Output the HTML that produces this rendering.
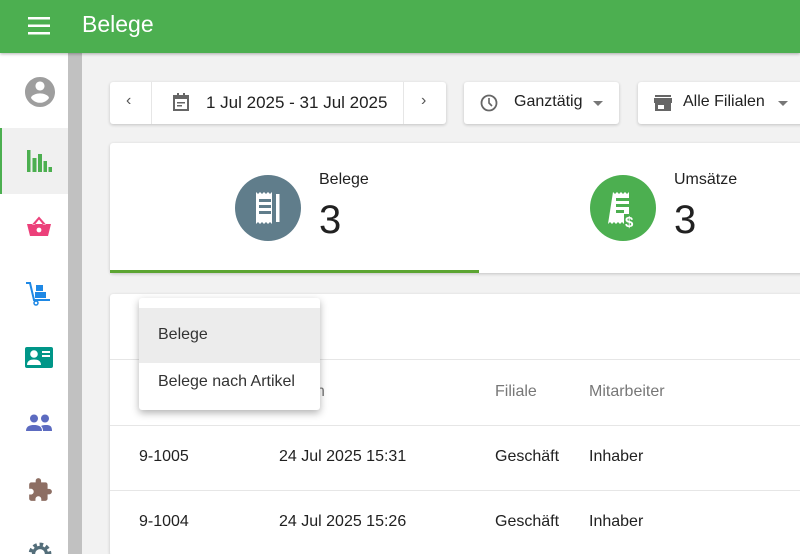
<!DOCTYPE html>
<html style="overflow:hidden"><head><style>
*{box-sizing:border-box;margin:0;padding:0}
html,body{width:800px;height:554px;overflow:hidden}
body{background:#f2f2f2;font-family:"Liberation Sans",sans-serif;position:relative;color:#212121}
.hdr{position:absolute;left:0;top:0;width:800px;height:53px;background:#4caf50;box-shadow:0 1px 3px rgba(0,0,0,.3);z-index:2}
.hdr .t{position:absolute;left:82px;top:11px;color:#fff;font-size:23px}
.side{position:absolute;left:0;top:53px;width:68px;height:501px;background:#fff;overflow:hidden}
.scr{position:absolute;left:68px;top:53px;width:14px;height:501px;background:#c1c1c1}
.ic{position:absolute}
.card{position:absolute;background:#fff;border-radius:3px;box-shadow:0 1px 3px rgba(0,0,0,.2)}
.tx{position:absolute;font-size:16px;white-space:nowrap}
.line{position:absolute;left:110px;width:690px;height:1px;background:#e6e6e6}
</style></head><body>
<div class="hdr">
<svg style="position:absolute;left:28px;top:17px" width="22" height="18"><rect y="0" width="22" height="2.5" fill="#fff"/><rect y="7.5" width="22" height="2.5" fill="#fff"/><rect y="15" width="22" height="2.5" fill="#fff"/></svg>
<div class="t">Belege</div></div>
<div class="side">
<svg class="ic" style="top:21px;left:22px" width="36" height="36" viewBox="0 0 24 24"><path fill="#9e9e9e" d="M12 2C6.5 2 2 6.5 2 12s4.5 10 10 10 10-4.5 10-10S17.5 2 12 2zm0 3c1.7 0 3 1.3 3 3s-1.3 3-3 3-3-1.3-3-3 1.3-3 3-3zm0 14.2c-2.5 0-4.7-1.3-6-3.2 0-2 4-3.1 6-3.1s6 1.1 6 3.1c-1.3 1.9-3.5 3.2-6 3.2z"/></svg>
<div style="position:absolute;left:0;top:75px;width:68px;height:66px;background:#f0f0f0;border-left:2px solid #4caf50"></div>
<svg class="ic" style="top:97px;left:27px" width="25" height="22"><path fill="#4caf50" d="M0 0h3.5v22H0zM5.5 22V8h4v14zM11 22V4h4v18zM16.5 22V11h3.5v11zM21.5 22v-5h3.5v5z"/></svg>
<svg class="ic" style="top:162px;left:26px" width="26" height="24" viewBox="0 0 26 24"><path fill="#ec407a" d="M13 1.5l-7 8h3l4-5 4 5h3zM1 9h24l-3 12H4z"/><circle cx="13" cy="15" r="2.4" fill="#fff"/></svg>
<svg class="ic" style="top:227px;left:25px" width="28" height="28" viewBox="0 0 28 28"><path fill="none" stroke="#1e88e5" stroke-width="2" d="M1 3h4l4 17h16"/><rect x="11" y="5" width="7" height="6" fill="#1e88e5"/><rect x="10" y="12" width="11" height="6" fill="#1e88e5"/><circle cx="11" cy="23" r="2" fill="none" stroke="#1e88e5" stroke-width="1.5"/></svg>
<svg class="ic" style="top:294px;left:25px" width="28" height="22"><rect width="28" height="21" rx="2" fill="#009688"/><circle cx="9" cy="7" r="3.8" fill="#fff"/><path fill="#fff" d="M2 18c0-4 3-5.5 7-5.5s7 1.5 7 5.5z"/><rect x="17" y="4" width="8" height="2" fill="#fff"/><rect x="17" y="8" width="8" height="2" fill="#fff"/></svg>
<svg class="ic" style="top:361px;left:26px" width="28" height="18"><circle cx="8" cy="4.5" r="4" fill="#5c6bc0"/><circle cx="19" cy="4.5" r="4" fill="#5c6bc0"/><path fill="#5c6bc0" d="M0 17c0-5 4-6 8-6s8 1 8 6zM17 17c0-3-1-4-2-5 2-1 4-1 5-1 4 0 6 1 6 6z"/></svg>
<svg class="ic" style="top:424px;left:27px" width="26" height="26" viewBox="0 0 24 24"><path fill="#8d6e63" d="M20.5 11H19V7c0-1.1-.9-2-2-2h-4V3.5a2.5 2.5 0 0 0-5 0V5H4c-1.1 0-2 .9-2 2v3.8h1.5c1.5 0 2.7 1.2 2.7 2.7S5 16.2 3.5 16.2H2V20c0 1.1.9 2 2 2h3.8v-1.5c0-1.5 1.2-2.7 2.7-2.7s2.7 1.2 2.7 2.7V22H17c1.1 0 2-.9 2-2v-4h1.5a2.5 2.5 0 0 0 0-5z"/></svg>
<svg class="ic" style="top:488px;left:27px" width="26" height="26" viewBox="0 0 24 24"><circle cx="12" cy="12" r="8" fill="none" stroke="#546e7a" stroke-width="5" stroke-dasharray="3 2.3"/><circle cx="12" cy="12" r="6" fill="none" stroke="#546e7a" stroke-width="3"/></svg>
</div>
<div class="scr"></div>

<div class="card" style="left:110px;top:82px;width:336px;height:42px">
<div style="position:absolute;left:41px;top:0;width:1px;height:42px;background:#e6e6e6"></div>
<div style="position:absolute;left:293px;top:0;width:1px;height:42px;background:#e6e6e6"></div>
<div class="tx" style="left:16px;top:10px;color:#555">‹</div>
<svg style="position:absolute;left:63px;top:11px" width="16" height="18"><rect x="1" y="3" width="14" height="14" fill="none" stroke="#666" stroke-width="2"/><rect x="1" y="3" width="14" height="3" fill="#666"/><rect x="4" y="0" width="2" height="4" fill="#666"/><rect x="10" y="0" width="2" height="4" fill="#666"/><rect x="4" y="9" width="8" height="1.5" fill="#666"/><rect x="4" y="12" width="5" height="1.5" fill="#666"/></svg>
<div class="tx" style="left:96px;top:11px;font-size:17px">1 Jul 2025 - 31 Jul 2025</div>
<div class="tx" style="left:311px;top:10px;color:#555">›</div>
</div>
<div class="card" style="left:464px;top:82px;width:155px;height:42px">
<svg style="position:absolute;left:16px;top:12px" width="18" height="18"><circle cx="9" cy="9" r="7.5" fill="none" stroke="#666" stroke-width="1.8"/><path d="M9 4v5l3 3" fill="none" stroke="#666" stroke-width="1.6"/></svg>
<div class="tx" style="left:50px;top:11px">Ganztätig</div>
<svg style="position:absolute;left:129px;top:19px" width="10" height="5"><path d="M0 0h10L5 5z" fill="#777"/></svg>
</div>
<div class="card" style="left:638px;top:82px;width:170px;height:42px">
<svg style="position:absolute;left:16px;top:13px" width="18" height="16"><rect x="1" y="0" width="16" height="2" fill="#666"/><path d="M0 3h18l1 5H-1z" fill="#666"/><rect x="1" y="8" width="16" height="8" fill="#666"/><rect x="4" y="10" width="6" height="4" fill="#fff"/></svg>
<div class="tx" style="left:45px;top:11px">Alle Filialen</div>
<svg style="position:absolute;left:140px;top:19px" width="10" height="5"><path d="M0 0h10L5 5z" fill="#777"/></svg>
</div>

<div class="card" style="left:110px;top:143px;width:700px;height:130px">
<div style="position:absolute;left:0;bottom:0;width:369px;height:3px;background:#5ca532"></div>
<svg style="position:absolute;left:125px;top:32px" width="66" height="66"><circle cx="33" cy="33" r="33" fill="#607d8b"/><path fill="#fff" d="M21 17l2 2 2-2 2 2 2-2 2 2 2-2 2 2 2-2v32l-2-2-2 2-2-2-2 2-2-2-2 2-2-2-2 2z"/><rect x="41" y="19" width="3.5" height="28" fill="#fff"/><rect x="24" y="24" width="12" height="3" fill="#607d8b"/><rect x="24" y="30" width="12" height="3" fill="#607d8b"/><rect x="24" y="36" width="12" height="3" fill="#607d8b"/></svg>
<div class="tx" style="left:209px;top:28px;font-size:16px">Belege</div>
<div class="tx" style="left:209px;top:55px;font-size:40px">3</div>
<svg style="position:absolute;left:480px;top:32px" width="66" height="66"><circle cx="33" cy="33" r="33" fill="#4caf50"/><path fill="#fff" d="M23 17l2 2 2-2 2 2 2-2 2 2 2-2 2 2 2-2v22h-5v10l-2-2-2 2-2-2-2 2-2-2-2 2-2-2-2 2z"/><rect x="26" y="23" width="13" height="3" fill="#4caf50"/><rect x="26" y="29" width="13" height="3" fill="#4caf50"/><rect x="26" y="35" width="8" height="3" fill="#4caf50"/><text x="35" y="52" font-size="15" fill="#fff" font-family="Liberation Sans" font-weight="bold">$</text></svg>
<div class="tx" style="left:564px;top:28px;font-size:16px">Umsätze</div>
<div class="tx" style="left:564px;top:55px;font-size:40px">3</div>
</div>

<div class="card" style="left:110px;top:294px;width:700px;height:262px"></div>
<div class="line" style="top:359px"></div>
<div class="line" style="top:425px"></div>
<div class="line" style="top:490px"></div>
<div class="tx" style="left:316px;top:383px;color:#777">n</div>
<div class="tx" style="left:495px;top:383px;color:#777">Filiale</div>
<div class="tx" style="left:589px;top:383px;color:#777">Mitarbeiter</div>
<div class="tx" style="left:139px;top:448px">9-1005</div>
<div class="tx" style="left:279px;top:448px">24 Jul 2025 15:31</div>
<div class="tx" style="left:495px;top:448px">Geschäft</div>
<div class="tx" style="left:589px;top:448px">Inhaber</div>
<div class="tx" style="left:139px;top:513px">9-1004</div>
<div class="tx" style="left:279px;top:513px">24 Jul 2025 15:26</div>
<div class="tx" style="left:495px;top:513px">Geschäft</div>
<div class="tx" style="left:589px;top:513px">Inhaber</div>

<div style="position:absolute;left:139px;top:298px;width:181px;height:112px;background:#fff;border-radius:3px;box-shadow:0 3px 8px rgba(0,0,0,.3)">
<div style="position:absolute;left:0;top:10px;width:181px;height:55px;background:#ececec"></div>
<div class="tx" style="left:19px;top:28px;color:#333">Belege</div>
<div class="tx" style="left:19px;top:75px;color:#333">Belege nach Artikel</div>
</div>
</body></html>
